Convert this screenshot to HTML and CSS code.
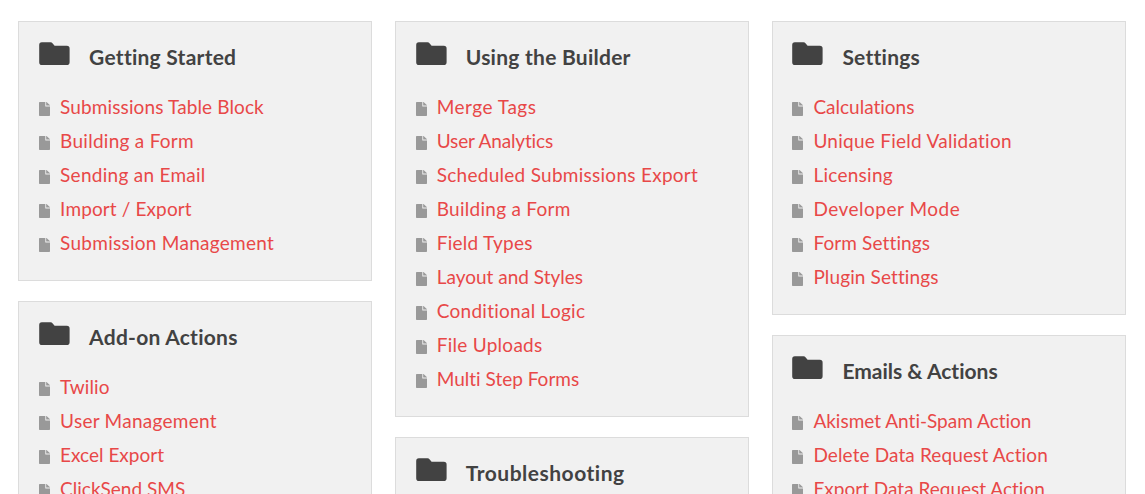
FILE: index.html
```html
<!DOCTYPE html>
<html lang="en">
<head>
  <meta charset="UTF-8" />
  <meta name="viewport" content="width=device-width, initial-scale=1.0"/>
  <title>Documentation</title>
  <link rel="stylesheet" href="styles.css">
</head>
<body>
  <svg class="sprite" aria-hidden="true">
    <symbol id="folder" viewBox="0 0 31 24">
      <path d="M2.8 0.2H11.5Q12.8 0.2 13.7 1.4L15.6 3.8H27.8Q30.6 3.8 30.6 6.6V20.2Q30.6 23 27.8 23H2.8Q0.2 23 0.2 20.2V3Q0.2 0.2 2.8 0.2Z"/>
    </symbol>
    <symbol id="file" viewBox="0 0 11 14">
      <path d="M0.7 0H6.3V4.4H11V13.3Q11 14 10.3 14H0.7Q0 14 0 13.3V0.7Q0 0 0.7 0Z"/>
      <path d="M7.2 0H7.6L11 3.2V3.6H7.2Z"/>
    </symbol>
  </svg>

  <div class="docs">
    <div class="column">
      <section class="card">
        <h2><svg class="folder"><use href="#folder"/></svg>Getting Started</h2>
        <ul>
          <li><svg class="file"><use href="#file"/></svg><a href="#" class="mild">Submissions Table Block</a></li>
          <li><svg class="file"><use href="#file"/></svg><a href="#">Building a Form</a></li>
          <li><svg class="file"><use href="#file"/></svg><a href="#">Sending an Email</a></li>
          <li><svg class="file"><use href="#file"/></svg><a href="#" class="mild">Import / Export</a></li>
          <li><svg class="file"><use href="#file"/></svg><a href="#">Submission Management</a></li>
        </ul>
      </section>
      <section class="card">
        <h2><svg class="folder"><use href="#folder"/></svg>Add-on Actions</h2>
        <ul>
          <li><svg class="file"><use href="#file"/></svg><a href="#" class="mild">Twilio</a></li>
          <li><svg class="file"><use href="#file"/></svg><a href="#">User Management</a></li>
          <li><svg class="file"><use href="#file"/></svg><a href="#" class="snug">Excel Export</a></li>
          <li><svg class="file"><use href="#file"/></svg><a href="#" class="snug">ClickSend SMS</a></li>
        </ul>
      </section>
    </div>

    <div class="column">
      <section class="card">
        <h2><svg class="folder"><use href="#folder"/></svg>Using the Builder</h2>
        <ul>
          <li><svg class="file"><use href="#file"/></svg><a href="#" class="wide">Merge Tags</a></li>
          <li><svg class="file"><use href="#file"/></svg><a href="#" class="tight">User Analytics</a></li>
          <li><svg class="file"><use href="#file"/></svg><a href="#">Scheduled Submissions Export</a></li>
          <li><svg class="file"><use href="#file"/></svg><a href="#">Building a Form</a></li>
          <li><svg class="file"><use href="#file"/></svg><a href="#">Field Types</a></li>
          <li><svg class="file"><use href="#file"/></svg><a href="#" class="snug">Layout and Styles</a></li>
          <li><svg class="file"><use href="#file"/></svg><a href="#">Conditional Logic</a></li>
          <li><svg class="file"><use href="#file"/></svg><a href="#">File Uploads</a></li>
          <li><svg class="file"><use href="#file"/></svg><a href="#" class="snug">Multi Step Forms</a></li>
        </ul>
      </section>
      <section class="card">
        <h2 class="wide"><svg class="folder"><use href="#folder"/></svg>Troubleshooting</h2>
      </section>
    </div>

    <div class="column">
      <section class="card">
        <h2><svg class="folder"><use href="#folder"/></svg>Settings</h2>
        <ul>
          <li><svg class="file"><use href="#file"/></svg><a href="#" class="snug">Calculations</a></li>
          <li><svg class="file"><use href="#file"/></svg><a href="#">Unique Field Validation</a></li>
          <li><svg class="file"><use href="#file"/></svg><a href="#">Licensing</a></li>
          <li><svg class="file"><use href="#file"/></svg><a href="#" class="wide">Developer Mode</a></li>
          <li><svg class="file"><use href="#file"/></svg><a href="#" class="mild">Form Settings</a></li>
          <li><svg class="file"><use href="#file"/></svg><a href="#" class="mild">Plugin Settings</a></li>
        </ul>
      </section>
      <section class="card">
        <h2 class="snug"><svg class="folder"><use href="#folder"/></svg>Emails &amp; Actions</h2>
        <ul>
          <li><svg class="file"><use href="#file"/></svg><a href="#" class="snug">Akismet Anti-Spam Action</a></li>
          <li><svg class="file"><use href="#file"/></svg><a href="#" class="mild">Delete Data Request Action</a></li>
          <li><svg class="file"><use href="#file"/></svg><a href="#" class="snug">Export Data Request Action</a></li>
        </ul>
      </section>
    </div>
  </div>
</body>
</html>
```
FILE: styles.css
```css
* { box-sizing: border-box; }
body {
  margin: 0;
  height: 100vh;
  overflow: hidden;
  background: #fff;
  color: #424242;
  font-family: Lato, "Liberation Sans", sans-serif;
  font-variant-ligatures: none;
}
.sprite { display: none; }
.docs {
  display: grid;
  grid-template-columns: repeat(3, 354px);
  column-gap: 22.65px;
  height: 100vh;
  overflow: hidden;
  padding: 21px 18.3px 0;
}
.column {
  display: flex;
  flex-direction: column;
  gap: 20px;
}
.card {
  padding: 20px 19.8px;
  background: #f1f1f1;
  border: 1px solid #dcdcdc;
}
h2 {
  display: flex;
  gap: 19px;
  margin: 0 0 18px;
  font-size: 21px;
  font-weight: 700;
  line-height: 30px;
  letter-spacing: 0.25px;
}
ul {
  margin: 0;
  padding: 0;
  list-style: none;
}
li {
  display: flex;
  align-items: center;
  gap: 10px;
  height: 34px;
}
a {
  color: #e84848;
  font-size: 19px;
  line-height: 34px;
  letter-spacing: 0.27px;
  text-decoration: none;
  white-space: nowrap;
}
.wide { letter-spacing: 0.5px; }
.mild { letter-spacing: 0.12px; }
.snug { letter-spacing: 0; }
.tight { letter-spacing: -0.15px; }
.folder {
  width: 31px;
  height: 24px;
  fill: #424242;
}
.file {
  width: 11px;
  height: 14px;
  margin-top: 4px;
  fill: #999;
}
```
